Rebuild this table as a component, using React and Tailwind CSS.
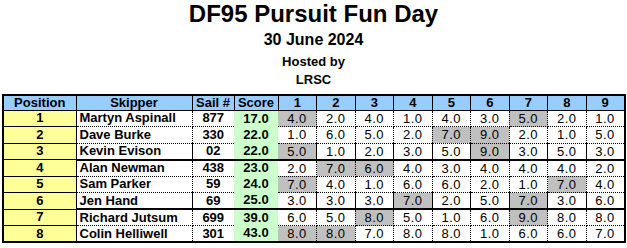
const rows = [
  { pos: 1, name: "Martyn Aspinall", sail: "877", score: "17.0", r: [4, 2, 4, 1, 4, 3, 5, 2, 1], drop: [0, 6] },
  { pos: 2, name: "Dave Burke", sail: "330", score: "22.0", r: [1, 6, 5, 2, 7, 9, 2, 1, 5], drop: [4, 5] },
  { pos: 3, name: "Kevin Evison", sail: "02", score: "22.0", r: [5, 1, 2, 3, 5, 9, 3, 5, 3], drop: [0, 5] },
  { pos: 4, name: "Alan Newman", sail: "438", score: "23.0", r: [2, 7, 6, 4, 3, 4, 4, 4, 2], drop: [1, 2] },
  { pos: 5, name: "Sam Parker", sail: "59", score: "24.0", r: [7, 4, 1, 6, 6, 2, 1, 7, 4], drop: [0, 7] },
  { pos: 6, name: "Jen Hand", sail: "69", score: "25.0", r: [3, 3, 3, 7, 2, 5, 7, 3, 6], drop: [3, 6] },
  { pos: 7, name: "Richard Jutsum", sail: "699", score: "39.0", r: [6, 5, 8, 5, 1, 6, 9, 8, 8], drop: [2, 6] },
  { pos: 8, name: "Colin Helliwell", sail: "301", score: "43.0", r: [8, 8, 7, 8, 8, 1, 6, 6, 7], drop: [0, 1] },
];

const races = [1, 2, 3, 4, 5, 6, 7, 8, 9];

export default function App() {
  return (
    <div className="w-[627px] h-[248px] bg-white font-['Liberation_Sans',Arial,sans-serif] text-black">
      {/* heading */}
      <div className="pt-[2px] flex flex-col items-center font-bold">
        <h1 className="text-[24px] leading-[24px]">DF95 Pursuit Fun Day</h1>
        <p className="mt-[5px] text-[16px] leading-[18px]">30 June 2024</p>
        <p className="mt-[5px] text-[13px] leading-[15px]">Hosted by</p>
        <p className="mt-[3px] text-[13px] leading-[15px]">LRSC</p>
      </div>

      <div className="pl-[2px] mt-[7px]">
        <table className="table-fixed border-collapse border-2 border-black text-[13px] w-[622px]">
          <colgroup>
            <col className="w-[73px]" />
            <col className="w-[116px]" />
            <col className="w-[42px]" />
            <col className="w-[44px]" />
            {races.map((n) => (
              <col key={n} className="w-[38.5px]" />
            ))}
          </colgroup>
          <thead>
            <tr className="h-[15px] bg-[#99ccff] font-bold">
              <th className="border border-black leading-[13px] p-0">Position</th>
              <th className="border border-black leading-[13px] p-0">Skipper</th>
              <th className="border border-black leading-[13px] p-0">Sail #</th>
              <th className="border border-black leading-[13px] p-0">Score</th>
              {races.map((n) => (
                <th key={n} className="border border-black leading-[13px] p-0">
                  {n}
                </th>
              ))}
            </tr>
          </thead>
          <tbody>
            {rows.map((row) => {
              const thick = row.pos === 3 || row.pos === 6;
              const bottom = thick ? "border-b-2 border-b-black border-solid" : "border-b border-dotted border-black";
              return (
                <tr key={row.pos} className="h-[16.5px] leading-[14px]">
                  <td className="bg-[#ffff99] border-r border-b border-solid border-black text-center font-bold p-0">
                    {row.pos}
                  </td>
                  <td className={`border-r border-r-dotted border-r-black ${bottom} font-bold text-left pl-[3px] p-0 whitespace-nowrap`}>
                    {row.name}
                  </td>
                  <td className={`${bottom} text-center font-bold p-0`}>{row.sail}</td>
                  <td className={`bg-[#ccffcc] text-center font-bold p-0 ${thick ? "border-b-2 border-solid border-black" : ""}`}>
                    {row.score}
                  </td>
                  {row.r.map((v, i) => (
                    <td
                      key={i}
                      className={`${row.drop.includes(i) ? "bg-[#c0c0c0]" : ""} border-r border-r-dotted border-r-black ${bottom} text-center tracking-[0.5px] p-0 pt-[1px]`}
                    >
                      {v.toFixed(1)}
                    </td>
                  ))}
                </tr>
              );
            })}
          </tbody>
        </table>
      </div>
    </div>
  );
}
